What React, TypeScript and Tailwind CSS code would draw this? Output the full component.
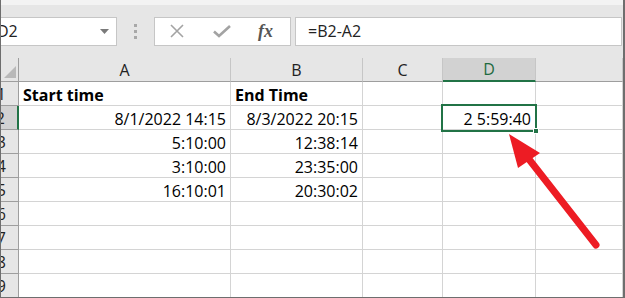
import React from "react";

interface Cell {
    text: string;
    bold?: boolean;
    right?: boolean;
}

type Row = [Cell | null, Cell | null, Cell | null, Cell | null, Cell | null];

const rows: Row[] = [
    [{ text: "Start time", bold: true }, { text: "End Time", bold: true }, null, null, null],
    [{ text: "8/1/2022 14:15", right: true }, { text: "8/3/2022 20:15", right: true }, null, { text: "2 5:59:40", right: true }, null],
    [{ text: "5:10:00", right: true }, { text: "12:38:14", right: true }, null, null, null],
    [{ text: "3:10:00", right: true }, { text: "23:35:00", right: true }, null, null, null],
    [{ text: "16:10:01", right: true }, { text: "20:30:02", right: true }, null, null, null],
    [null, null, null, null, null],
    [null, null, null, null, null],
    [null, null, null, null, null],
    [null, null, null, null, null],
];

const columns = ["A", "B", "C", "D", ""];

const App = () => {
    return (
        <div
            className="relative w-[625px] h-[298px] overflow-hidden bg-[#e6e6e6] border-l border-r-2 border-b border-[#6e6e6e] text-black"
            style={{ fontFamily: '"Open Sans", "Noto Sans", sans-serif' }}
        >
            {/* ribbon edge */}
            <div className="h-[5px] bg-[#f3f3f3]" />

            {/* formula bar */}
            <div className="flex items-center h-[53px] pb-[1px]">
                <div className="flex items-center justify-between w-[117px] h-[29px] ml-[-1px] bg-white border border-[#c6c6c6] overflow-hidden">
                    <span className="ml-[-4px] text-[16px] text-[#222]">D2</span>
                    <svg width="9" height="5" viewBox="0 0 9 5" className="mr-[7px]">
                        <path d="M0 0 H9 L4.5 5 Z" fill="#7a7a7a" />
                    </svg>
                </div>
                <div className="flex flex-col gap-[3px] ml-[17px] mr-[17px]">
                    <div className="w-[3px] h-[3px] bg-[#a8a8a8]" />
                    <div className="w-[3px] h-[3px] bg-[#a8a8a8]" />
                    <div className="w-[3px] h-[3px] bg-[#a8a8a8]" />
                </div>
                <div className="flex items-center w-[137px] h-[29px] bg-white border border-[#c6c6c6]">
                    <svg width="16" height="16" viewBox="0 0 16 16" className="ml-[14px]">
                        <path d="M2 2 L14 14 M14 2 L2 14" stroke="#a3a3a3" strokeWidth="1.6" />
                    </svg>
                    <svg width="18" height="16" viewBox="0 0 18 16" className="ml-[28px]">
                        <path d="M1 8.5 L6 13 L17 3" stroke="#a3a3a3" strokeWidth="2.6" fill="none" />
                    </svg>
                    <span
                        className="ml-[27px] text-[18px] italic font-bold text-[#555] leading-none"
                        style={{ fontFamily: '"Liberation Serif", serif' }}
                    >
                        fx
                    </span>
                </div>
                <div className="flex items-center flex-1 h-[29px] ml-[4px] mr-[1px] bg-white border border-[#c6c6c6]">
                    <span className="ml-[12px] text-[16px] text-[#222]">=B2-A2</span>
                </div>
            </div>

            {/* sheet */}
            <div className="grid grid-cols-[18px_212px_132px_80px_93px_1fr]">
                {/* header row */}
                <div className="relative h-[24px] border-r border-b border-[#9e9e9e] bg-[#e6e6e6]">
                    <svg width="12" height="12" viewBox="0 0 12 12" className="absolute right-[2px] bottom-[3px]">
                        <path d="M12 0 V12 H0 Z" fill="#b9b9b9" />
                    </svg>
                </div>
                {columns.map((c) =>
                    c === "D" ? (
                        <div
                            key={c}
                            className="flex items-center justify-center h-[24px] bg-[#d2d2d2] border-r border-[#c6c6c6] border-b-2 border-b-[#217346] text-[16px] text-[#1e6b40]"
                        >
                            {c}
                        </div>
                    ) : (
                        <div
                            key={c}
                            className="flex items-center justify-center h-[24px] border-r border-[#c6c6c6] border-b border-b-[#9e9e9e] text-[16px] text-[#222]"
                        >
                            {c}
                        </div>
                    )
                )}

                {rows.map((row, i) => (
                    <React.Fragment key={i}>
                        <div
                            className={
                                i === 1
                                    ? "flex items-center justify-end pr-[12px] h-[24px] overflow-hidden bg-[#d2d2d2] border-r-2 border-r-[#217346] border-b border-b-[#9e9e9e] text-[16px] text-[#222]"
                                    : "flex items-center justify-end pr-[12px] h-[24px] overflow-hidden bg-[#e6e6e6] border-r border-[#9e9e9e] border-b text-[16px] text-[#222]"
                            }
                        >
                            {i + 1}
                        </div>
                        {row.map((cell, j) => (
                            <div
                                key={j}
                                className={
                                    "flex items-center h-[24px] pt-[2px] px-[4px] bg-white border-r border-b border-[#d4d4d4] text-[16px] whitespace-nowrap overflow-hidden " +
                                    (cell?.right ? "justify-end" : "justify-start") +
                                    (cell?.bold ? " font-bold" : "")
                                }
                            >
                                {cell?.text}
                            </div>
                        ))}
                    </React.Fragment>
                ))}
            </div>

            {/* selected cell D2 */}
            <div className="absolute left-[440px] top-[104px] w-[96px] h-[28px] border-2 border-[#217346]" />
            <div className="absolute left-[532px] top-[128px] w-[6px] h-[6px] bg-[#217346] border border-white" />

            {/* red arrow */}
            <svg width="625" height="298" viewBox="0 0 625 298" className="absolute left-0 top-0 pointer-events-none">
                <path d="M595 245 L527 158" stroke="#ed1c24" strokeWidth="7" strokeLinecap="round" />
                <path d="M508 134 L539 153 L517 168 Z" fill="#ed1c24" />
            </svg>
        </div>
    );
};

export default App;
